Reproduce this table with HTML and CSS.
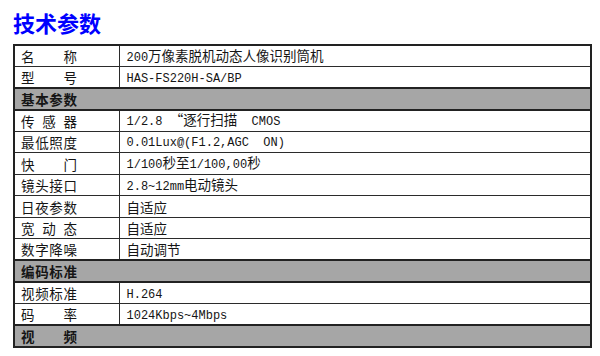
FILE: index.html
```html
<!DOCTYPE html>
<html lang="zh-CN">
<head>
<meta charset="utf-8">
<title>技术参数</title>
<link rel="stylesheet" href="styles.css">
</head>
<body>
<h1 class="title">技术参数</h1>
<table class="spec">
  <colgroup><col class="c-label"><col class="c-value"></colgroup>
  <tr><td class="lbl"><span class="j">名称</span></td><td class="val"><span class="en">200</span>万像素脱机动态人像识别筒机</td></tr>
  <tr><td class="lbl"><span class="j">型号</span></td><td class="val"><span class="en">HAS-FS220H-SA/BP</span></td></tr>
  <tr class="sec"><td colspan="2"><span class="j">基本参数</span></td></tr>
  <tr><td class="lbl"><span class="j">传感器</span></td><td class="val"><span class="en">1/2.8 </span>“逐行扫描<span class="en">  CMOS</span></td></tr>
  <tr><td class="lbl"><span class="j">最低照度</span></td><td class="val"><span class="en">0.01Lux@(F1.2,AGC  ON)</span></td></tr>
  <tr><td class="lbl"><span class="j">快门</span></td><td class="val"><span class="en">1/100</span>秒至<span class="en">1/100,00</span>秒</td></tr>
  <tr><td class="lbl"><span class="j">镜头接口</span></td><td class="val"><span class="en">2.8~12mm</span>电动镜头</td></tr>
  <tr><td class="lbl"><span class="j">日夜参数</span></td><td class="val">自适应</td></tr>
  <tr><td class="lbl"><span class="j">宽动态</span></td><td class="val">自适应</td></tr>
  <tr><td class="lbl"><span class="j">数字降噪</span></td><td class="val">自动调节</td></tr>
  <tr class="sec"><td colspan="2"><span class="j">编码标准</span></td></tr>
  <tr><td class="lbl"><span class="j">视频标准</span></td><td class="val"><span class="en">H.264</span></td></tr>
  <tr><td class="lbl"><span class="j">码率</span></td><td class="val"><span class="en">1024Kbps~4Mbps</span></td></tr>
  <tr class="sec"><td colspan="2"><span class="j">视频</span></td></tr>
</table>
</body>
</html>
```
FILE: styles.css
```css
html, body {
  margin: 0;
  padding: 0;
  background: #ffffff;
}

body {
  width: 600px;
  height: 356px;
  overflow: hidden;
  padding-left: 13px;
  box-sizing: border-box;
  font-family: "Noto Sans CJK SC", "Noto Sans", sans-serif;
  color: #151515;
}

.title {
  margin: 0 0 9px 0;
  padding-top: 9px;
  height: 26px;
  line-height: 26px;
  font-size: 22px;
  font-weight: 700;
  color: #0000ff;
}

.spec {
  border-collapse: collapse;
  width: 579px;
  border: 2px solid #222;
  table-layout: fixed;
}

.c-label { width: 105px; }

.spec td {
  height: 21.55px;
  box-sizing: border-box;
  border: 1px solid #2b2b2b;
  padding: 0 0 0 6px;
  font-size: 13.5px;
  line-height: 16px;
  vertical-align: middle;
  white-space: pre;
  overflow: hidden;
}

.spec td.val { padding-left: 7px; }

.j {
  display: inline-block;
  width: 56px;
  text-align: justify;
  text-align-last: justify;
  text-justify: inter-character;
  white-space: normal;
}

.en {
  font-family: "Liberation Mono", monospace;
  font-size: 12px;
}

.sec td {
  background: #a6a6a6;
  border: 2px solid #222;
  font-weight: 700;
}
```
